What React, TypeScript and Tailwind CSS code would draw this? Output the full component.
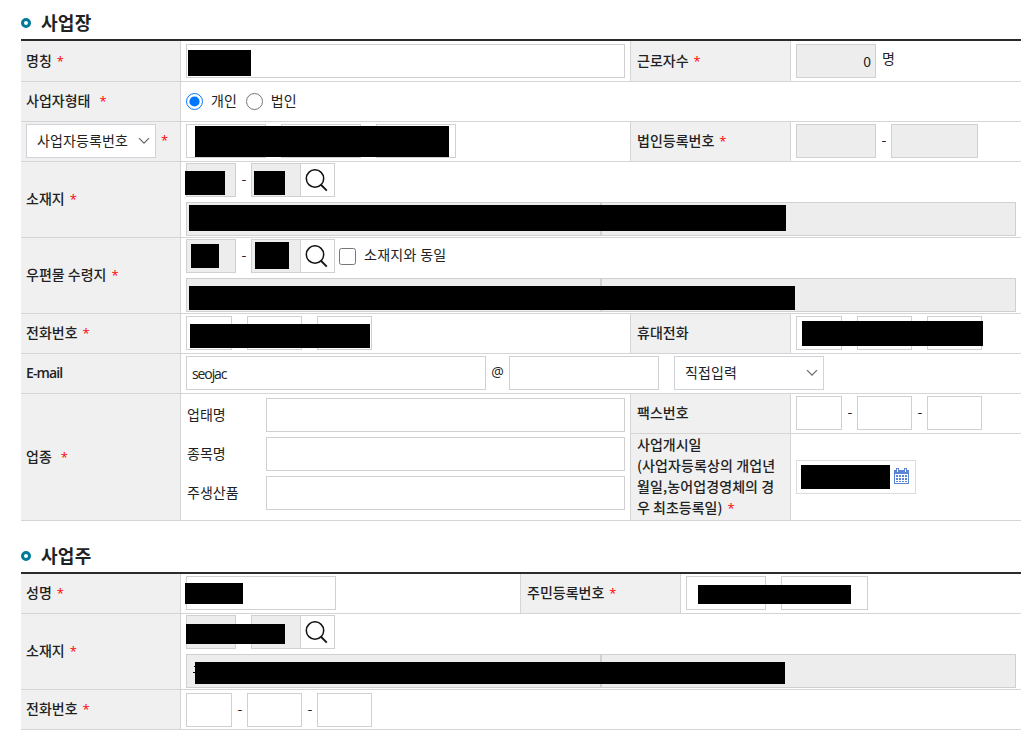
import type { ReactNode } from 'react';

interface LabelProps {
  children: ReactNode;
  required?: boolean;
  wide?: boolean;
  bordered?: boolean;
}

function Star() {
  return <span className="font-['Open_Sans'] text-[13px] leading-none font-normal text-[#ff0000]">*</span>;
}

function Label({ children, required, wide, bordered }: LabelProps) {
  return (
    <div
      className={`flex shrink-0 items-center border-r border-[#d5d5d5] bg-[#f0f0f0] font-medium ${
        bordered ? 'w-[161px] border-l pl-1.5' : 'w-40 pl-[5px]'
      }`}
    >
      <div className="-mt-0.5 whitespace-nowrap">
        {children}
        {required && (
          <span className={wide ? 'ml-[9px]' : 'ml-[5px]'}>
            <Star />
          </span>
        )}
      </div>
    </div>
  );
}

function Row({ className, children }: { className: string; children: ReactNode }) {
  return <div className={`flex border-b border-[#d5d5d5] ${className}`}>{children}</div>;
}

function Field({ className, value = '', disabled }: { className: string; value?: string; disabled?: boolean }) {
  return (
    <input
      readOnly
      value={value}
      className={`h-[34px] shrink-0 rounded-none border border-[#d0d0d0] px-[5px] outline-none ${
        disabled ? 'bg-[#ededed]' : 'bg-white'
      } ${className}`}
    />
  );
}

function Dash() {
  return <span className="flex h-[30px] w-[15px] shrink-0 items-center justify-center pl-px">-</span>;
}

// black cover over private values
function Mask({ className }: { className: string }) {
  return <div className={`absolute bg-black ${className}`} />;
}

function PhoneFields() {
  return (
    <div className="flex">
      <Field className="w-[46px]" />
      <Dash />
      <Field className="w-[55px]" />
      <Dash />
      <Field className="w-[55px]" />
    </div>
  );
}

function Chevron() {
  return (
    <svg width="12" height="8" viewBox="0 0 12 8" fill="none" stroke="#666" strokeWidth="1.2">
      <path d="M1 1.2 6 6.2 11 1.2" />
    </svg>
  );
}

function SelectBox({ className, children }: { className: string; children: ReactNode }) {
  return (
    <div className={`flex h-[34px] items-center justify-between border border-[#ced4da] bg-white pr-[5px] pl-2.5 font-normal ${className}`}>
      <span className="-mt-0.5 tracking-[0.1px]">{children}</span>
      <Chevron />
    </div>
  );
}

function ZipFields() {
  return (
    <>
      <Field disabled className="w-[50px]" />
      <Dash />
      <Field disabled className="w-[50px]" />
      <button className="flex h-[34px] w-[34px] shrink-0 items-center border border-l-0 border-[#d0d0d0] bg-white pl-1">
        <svg width="24" height="24" viewBox="0 0 24 24" fill="none" stroke="#111" strokeWidth="1.5">
          <circle cx="10" cy="10.5" r="8.7" />
          <path d="m16.2 17 5.6 5.6" strokeWidth="1.8" />
        </svg>
      </button>
    </>
  );
}

function AddressFields() {
  return (
    <div className="mt-[5px] flex">
      <Field disabled className="w-[415px]" />
      <Field disabled className="w-[415px]" />
    </div>
  );
}

function CalendarIcon() {
  return (
    <svg width="15" height="16" viewBox="0 0 15 16" shapeRendering="crispEdges">
      <path fill="#5b84d4" d="M0 2h15v14H0z" />
      <path fill="#fff" d="M1 6h13v9H1z" />
      <path fill="#5b84d4" d="M2 0h3v4H2zM10 0h3v4h-3z" />
      <path fill="#fff" d="M3 1h1v3H3zM11 1h1v3h-1z" />
      <path
        fill="#5b84d4"
        d="M2 7h2v2H2zM5 7h2v2H5zM8 7h2v2H8zM11 7h2v2h-2zM2 10h2v2H2zM5 10h2v2H5zM8 10h2v2H8zM11 10h2v2h-2zM2 13h2v1H2zM5 13h2v1H5zM8 13h2v1H8zM11 13h2v1h-2z"
      />
    </svg>
  );
}

function SectionTitle({ children }: { children: ReactNode }) {
  return (
    <h2 className="flex h-8 items-center border-b-2 border-[#2b2b2b] pb-0.5 text-lg leading-none font-bold tracking-[0.3px]">
      <span className="mr-2.5 h-2.5 w-2.5 rounded-full border-[3px] border-[#007a99]" />
      <span className="-mt-[3px]">{children}</span>
    </h2>
  );
}

const businessFields = ['업태명', '종목명', '주생산품'];

function Workplace() {
  return (
    <section>
      <SectionTitle>사업장</SectionTitle>
      <Row className="h-[41px]">
        <Label required>명칭</Label>
        <div className="relative w-[449px] pt-[3px] pl-[5px]">
          <Field className="w-[439px]" />
          <Mask className="top-[9px] left-[7px] h-[26px] w-[63px]" />
        </div>
        <Label required bordered>근로자수</Label>
        <div className="flex pt-[3px] pl-[5px]">
          <Field disabled value="0" className="w-20 pr-1 text-right" />
          <span className="mt-1 ml-1.5">명</span>
        </div>
      </Row>
      <Row className="h-10">
        <Label required wide>사업자형태</Label>
        <div className="flex items-center pl-[5px]">
          <input type="radio" name="kind" defaultChecked className="h-[17px] w-[17px]" />
          <span className="-mt-0.5 mr-[9px] ml-2">개인</span>
          <input type="radio" name="kind" className="h-[17px] w-[17px]" />
          <span className="-mt-0.5 ml-2">법인</span>
        </div>
      </Row>
      <Row className="h-10">
        <div className="flex w-40 shrink-0 border-r border-[#d5d5d5] bg-[#f0f0f0] pt-0.5 pl-[5px]">
          <SelectBox className="w-[130px]">사업자등록번호</SelectBox>
          <span className="mt-[5px] ml-[5px]">
            <Star />
          </span>
        </div>
        <div className="relative flex w-[449px] gap-[15px] pt-0.5 pl-[5px]">
          <Field className="w-20" />
          <Field className="w-20" />
          <Field className="w-20" />
          <Mask className="top-1 left-3.5 h-[31px] w-[254px]" />
        </div>
        <Label required bordered>법인등록번호</Label>
        <div className="flex pt-0.5 pl-[5px]">
          <Field disabled className="w-20" />
          <Dash />
          <Field disabled className="w-[87px]" />
        </div>
      </Row>
      <Row className="h-[76px]">
        <Label required>소재지</Label>
        <div className="relative pt-px pl-[5px]">
          <div className="flex">
            <ZipFields />
          </div>
          <AddressFields />
          <Mask className="top-[9px] left-1 h-6 w-10" />
          <Mask className="top-[9px] left-[73px] h-6 w-[31px]" />
          <Mask className="top-[43px] left-2 h-[26px] w-[597px]" />
        </div>
      </Row>
      <Row className="h-[76px]">
        <Label required>우편물 수령지</Label>
        <div className="relative pt-px pl-[5px]">
          <div className="flex">
            <ZipFields />
            <input type="checkbox" className="mt-[9px] ml-1 h-[17px] w-[17px]" />
            <span className="mt-[5px] ml-2 tracking-[0.3px]">소재지와 동일</span>
          </div>
          <AddressFields />
          <Mask className="top-1.5 left-2.5 h-6 w-7" />
          <Mask className="top-1 left-[74px] h-[27px] w-[34px]" />
          <Mask className="top-12 left-2 h-6 w-[606px]" />
        </div>
      </Row>
      <Row className="h-10">
        <Label required>전화번호</Label>
        <div className="relative w-[449px] pt-0.5 pl-[5px]">
          <PhoneFields />
          <Mask className="top-2.5 left-[9px] h-6 w-[180px]" />
        </div>
        <Label bordered>휴대전화</Label>
        <div className="relative pt-0.5 pl-[5px]">
          <PhoneFields />
          <Mask className="top-[7px] left-[11px] h-[25px] w-[181px]" />
        </div>
      </Row>
      <Row className="h-10">
        <Label>
          <span className="font-['Open_Sans'] text-sm font-semibold tracking-[-0.9px]">E-mail</span>
        </Label>
        <div className="flex pt-0.5 pl-[5px]">
          <Field value="seojac" className="w-[300px] font-['Open_Sans'] tracking-[-1.1px]" />
          <span className="mt-1.5 w-[23px] text-center font-['Open_Sans'] text-sm">@</span>
          <Field className="mr-[15px] w-[150px]" />
          <SelectBox className="w-[150px]">직접입력</SelectBox>
        </div>
      </Row>
      <Row className="h-[127px]">
        <Label required wide>업종</Label>
        <div className="flex w-[449px] flex-col gap-[5px] pt-1 pl-[5px]">
          {businessFields.map((name) => (
            <div key={name} className="flex items-center">
              <span className="-mt-0.5 w-20 pl-px">{name}</span>
              <Field className="w-[359px]" />
            </div>
          ))}
        </div>
        <div className="flex flex-1 flex-col">
          <Row className="h-10">
            <Label bordered>팩스번호</Label>
            <div className="pt-0.5 pl-[5px]">
              <PhoneFields />
            </div>
          </Row>
          <div className="flex flex-1">
            <Label required bordered>
              사업개시일
              <br />
              <span className="tracking-[0.1px]">(사업자등록상의 개업년</span>
              <br />
              <span className="tracking-[0.1px]">월일,농어업경영체의 경</span>
              <br />우 최초등록일)
            </Label>
            <div className="relative flex items-center pl-[5px]">
              <div className="mt-[-1px] flex h-[34px] w-[120px] items-center justify-end border border-[#dcdcdc] pr-1.5 pb-px">
                <CalendarIcon />
              </div>
              <Mask className="top-[31px] left-2.5 h-6 w-[89px]" />
            </div>
          </div>
        </div>
      </Row>
    </section>
  );
}

function Owner() {
  return (
    <section className="mt-[21px]">
      <SectionTitle>사업주</SectionTitle>
      <Row className="h-10">
        <Label required>성명</Label>
        <div className="relative w-[339px] pt-0.5 pl-[5px]">
          <Field className="w-[150px]" />
          <Mask className="top-[9px] left-1 h-[21px] w-[58px]" />
        </div>
        <Label required bordered>주민등록번호</Label>
        <div className="relative flex gap-[15px] pt-0.5 pl-[5px]">
          <Field className="w-20" />
          <Field className="w-[87px]" />
          <Mask className="top-[11px] left-[17px] h-[19px] w-[153px]" />
        </div>
      </Row>
      <Row className="h-[76px]">
        <Label required>소재지</Label>
        <div className="relative pt-px pl-[5px]">
          <div className="flex">
            <ZipFields />
          </div>
          <AddressFields />
          <Mask className="top-2.5 left-[5px] h-5 w-[99px]" />
          <Mask className="top-12 left-3.5 h-[22px] w-[590px]" />
          <Mask className="top-[52px] left-[13px] h-px w-px" />
          <Mask className="top-[58px] left-3 h-px w-0.5" />
        </div>
      </Row>
      <Row className="h-10">
        <Label required>전화번호</Label>
        <div className="pt-[3px] pl-[5px]">
          <PhoneFields />
        </div>
      </Row>
    </section>
  );
}

export default function App() {
  return (
    <main className="h-[748px] w-[1027px] overflow-hidden bg-white pt-[9px] pr-1.5 pl-[21px] font-['Noto_Sans_CJK_KR',sans-serif] text-sm leading-[21px] text-[#222]">
      <Workplace />
      <Owner />
    </main>
  );
}
